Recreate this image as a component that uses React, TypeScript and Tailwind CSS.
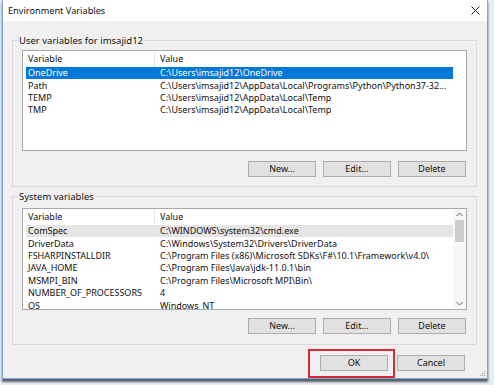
import React from "react";

const userVars: [string, string][] = [
  ["OneDrive", "C:\\Users\\imsajid12\\OneDrive"],
  ["Path", "C:\\Users\\imsajid12\\AppData\\Local\\Programs\\Python\\Python37-32..."],
  ["TEMP", "C:\\Users\\imsajid12\\AppData\\Local\\Temp"],
  ["TMP", "C:\\Users\\imsajid12\\AppData\\Local\\Temp"],
];

const systemVars: [string, string][] = [
  ["ComSpec", "C:\\WINDOWS\\system32\\cmd.exe"],
  ["DriverData", "C:\\Windows\\System32\\Drivers\\DriverData"],
  ["FSHARPINSTALLDIR", "C:\\Program Files (x86)\\Microsoft SDKs\\F#\\10.1\\Framework\\v4.0\\"],
  ["JAVA_HOME", "C:\\Program Files\\Java\\jdk-11.0.1\\bin"],
  ["MSMPI_BIN", "C:\\Program Files\\Microsoft MPI\\Bin\\"],
  ["NUMBER_OF_PROCESSORS", "4"],
  ["OS", "Windows_NT"],
];

const Btn = ({ label, className = "" }: { label: string; className?: string }) => (
  <div
    className={`h-[16px] w-[68px] flex items-center justify-center bg-[#e1e1e1] border border-[#adadad] ${className}`}
  >
    {label}
  </div>
);

const ListHeader = () => (
  <div className="flex h-[16px] items-center shrink-0">
    <div className="w-[132px] shrink-0 pl-[5px] h-full flex items-center border-r border-[#e5e5e5]">Variable</div>
    <div className="pl-[5px]">Value</div>
  </div>
);

const Row = ({
  name,
  value,
  selected,
  hover,
}: {
  name: string;
  value: string;
  selected?: boolean;
  hover?: boolean;
}) => (
  <div
    className={`flex h-[12.4px] items-center ml-[3px] w-[427px] shrink-0 whitespace-nowrap overflow-hidden ${
      selected ? "bg-[#0078d7] text-white" : hover ? "bg-[#e5e5e5]" : ""
    }`}
  >
    <div className="w-[134px] shrink-0 pl-[2px]">{name}</div>
    <div>{value}</div>
  </div>
);

const Chevron = ({ up }: { up?: boolean }) => (
  <svg width="7" height="5" viewBox="0 0 7 5">
    <path
      d={up ? "M0.5 4 L3.5 1 L6.5 4" : "M0.5 1 L3.5 4 L6.5 1"}
      fill="none"
      stroke="#606060"
      strokeWidth="1"
    />
  </svg>
);

const App = () => {
  return (
    <div
      className="w-[494px] h-[385px] bg-[#e8edf2] overflow-hidden text-[9px] leading-[12px] text-[#111]"
      style={{ fontFamily: '"Noto Sans", "Open Sans", sans-serif' }}
    >
      <div className="ml-[2px] w-[486px] h-[379px] border-x border-b border-[#7aa7d6] bg-[#f0f0f0] flex flex-col relative shadow-[0_3px_2px_rgba(40,50,60,0.75)]">
        {/* title bar */}
        <div className="h-[21px] bg-white flex items-center justify-between pl-[5px] pr-[7px] shrink-0">
          <span className="text-[9.2px]">Environment Variables</span>
          <svg width="9" height="9" viewBox="0 0 9 9">
            <path d="M0.5 0.5 L8.5 8.5 M8.5 0.5 L0.5 8.5" stroke="#222" strokeWidth="1" />
          </svg>
        </div>

        <div className="pl-[9px] pr-[10px] flex flex-col">
          {/* user variables */}
          <fieldset className="mt-[13px] border border-[#dadada] px-[9px] pb-[9px] pt-[3px]">
            <legend className="ml-[-4px] px-[1px] leading-[13px] text-[9.5px]">User variables for imsajid12</legend>
            <div className="h-[101px] bg-white border border-[#a9a9a9] flex flex-col overflow-hidden">
              <ListHeader />
              {userVars.map(([n, v], i) => (
                <Row key={n} name={n} value={v} selected={i === 0} />
              ))}
            </div>
            <div className="flex justify-end gap-[7px] mt-[10px] pr-[1px]">
              <Btn label="New..." />
              <Btn label="Edit..." />
              <Btn label="Delete" />
            </div>
          </fieldset>

          {/* system variables */}
          <fieldset className="mt-[3px] border border-[#dadada] px-[9px] pb-[10px] pt-[5px]">
            <legend className="ml-[-4px] px-[1px] leading-[13px] text-[9.5px]">System variables</legend>
            <div className="h-[102px] bg-white border border-[#a9a9a9] flex overflow-hidden">
              <div className="flex-1 flex flex-col overflow-hidden">
                <ListHeader />
                {systemVars.map(([n, v], i) => (
                  <Row key={n} name={n} value={v} hover={i === 0} />
                ))}
              </div>
              <div className="w-[13px] flex flex-col items-center bg-[#f7f7f7]">
                <div className="h-[11px] flex items-center justify-center">
                  <Chevron up />
                </div>
                <div className="w-[9px] h-[22px] bg-[#cdcdcd]" />
                <div className="flex-1" />
                <div className="h-[11px] flex items-center justify-center">
                  <Chevron />
                </div>
              </div>
            </div>
            <div className="flex justify-end gap-[7px] mt-[8px] pr-[1px]">
              <Btn label="New..." />
              <Btn label="Edit..." />
              <Btn label="Delete" />
            </div>
          </fieldset>
        </div>

        {/* dialog buttons */}
        <div className="flex justify-end gap-[9px] pr-[22px] mt-[10px]">
          <div className="relative">
            <Btn label="OK" className="w-[67px] border-[#0a76c4] border-[1.5px]" />
            <div className="absolute -left-[12px] -right-[7px] -top-[6px] -bottom-[7px] border-2 border-[#d42a35]" />
          </div>
          <Btn label="Cancel" />
        </div>

        {/* resize grip */}
        <div className="absolute right-[2px] bottom-[2px] grid grid-cols-3 gap-[1px]">
          <span className="w-[1px] h-[1px]" />
          <span className="w-[1px] h-[1px]" />
          <span className="w-[1px] h-[1px] bg-[#a0a0a0]" />
          <span className="w-[1px] h-[1px]" />
          <span className="w-[1px] h-[1px] bg-[#a0a0a0]" />
          <span className="w-[1px] h-[1px] bg-[#a0a0a0]" />
          <span className="w-[1px] h-[1px] bg-[#a0a0a0]" />
          <span className="w-[1px] h-[1px] bg-[#a0a0a0]" />
          <span className="w-[1px] h-[1px] bg-[#a0a0a0]" />
        </div>
      </div>
    </div>
  );
};

export default App;
